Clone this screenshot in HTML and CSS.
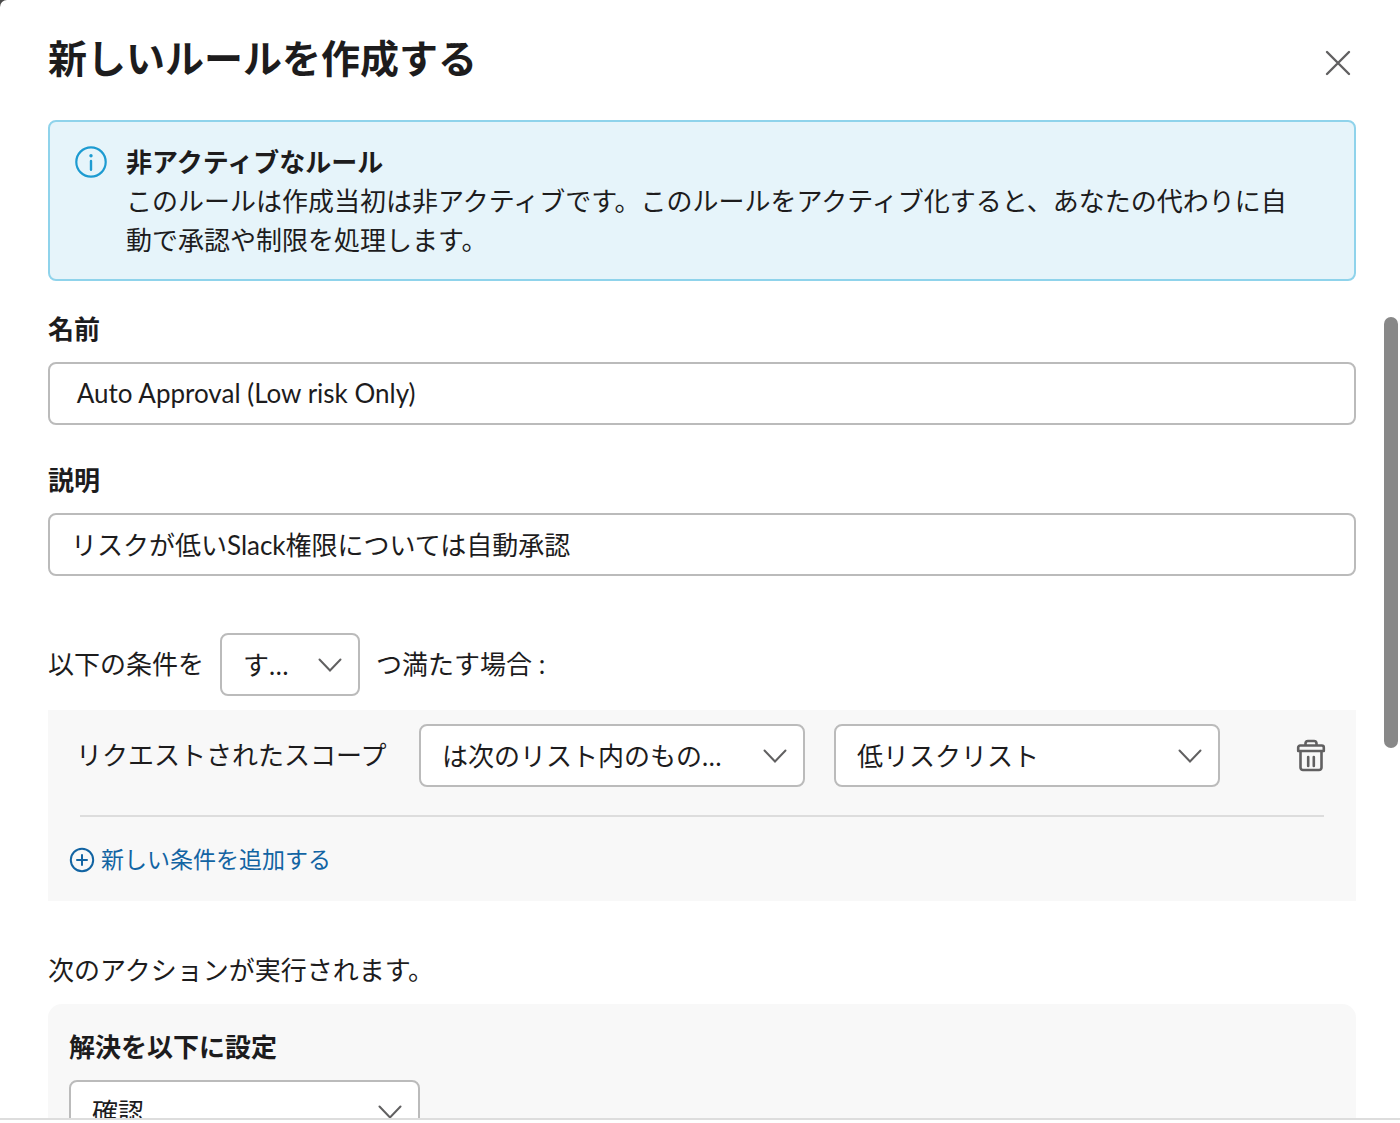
FILE: index.html
```
<!DOCTYPE html>
<html lang="ja">
<head>
<meta charset="utf-8">
<meta name="viewport" content="width=device-width, initial-scale=1">
<title>新しいルールを作成する</title>
<link rel="stylesheet" href="styles.css">
</head>
<body>
<form class="modal">
  <header class="modal-header">
    <h1 class="modal-title">新しいルールを作成する</h1>
    <button class="icon-button close" type="button" aria-label="閉じる">
      <svg width="28" height="28" viewBox="0 0 28 28" fill="none" stroke="currentColor" stroke-width="2.4" stroke-linecap="round"><path d="M3 3l22 22M25 3L3 25"/></svg>
    </button>
  </header>

  <main class="modal-body">
    <section class="notice">
      <svg class="notice-icon" width="32" height="32" viewBox="0 0 32 32" fill="none"><circle cx="16" cy="16" r="14.7" stroke="currentColor" stroke-width="2.2"/><circle cx="16" cy="9.7" r="1.7" fill="currentColor"/><path d="M16 15v8.7" stroke="currentColor" stroke-width="2.4" stroke-linecap="round"/></svg>
      <div class="notice-text">
        <strong>非アクティブなルール</strong>
        <p>このルールは作成当初は非アクティブです。このルールをアクティブ化すると、あなたの代わりに自動で承認や制限を処理します。</p>
      </div>
    </section>

    <div class="field">
      <label for="rule-name">名前</label>
      <input class="control" id="rule-name" type="text" value=" Auto Approval (Low risk Only)">
    </div>
    <div class="field">
      <label for="rule-desc">説明</label>
      <input class="control" id="rule-desc" type="text" value="リスクが低いSlack権限については自動承認">
    </div>

    <div class="match">
      <label for="match-mode">以下の条件を</label>
      <span class="select select-small">
        <select class="control" id="match-mode"><option>す…</option></select>
        <svg class="chevron" width="24" height="14" viewBox="0 0 24 14"><path d="M1.5 1.5L12 12.5L22.5 1.5"/></svg>
      </span>
      <span>つ満たす場合 :</span>
    </div>

    <section class="conditions">
      <div class="condition">
        <label for="operator">リクエストされたスコープ</label>
        <span class="select">
          <select class="control" id="operator"><option>は次のリスト内のもの…</option></select>
          <svg class="chevron" width="24" height="14" viewBox="0 0 24 14"><path d="M1.5 1.5L12 12.5L22.5 1.5"/></svg>
        </span>
        <span class="select">
          <select class="control" aria-label="リスト"><option>低リスクリスト</option></select>
          <svg class="chevron" width="24" height="14" viewBox="0 0 24 14"><path d="M1.5 1.5L12 12.5L22.5 1.5"/></svg>
        </span>
        <button class="icon-button delete" type="button" aria-label="条件を削除">
          <svg width="30" height="34" viewBox="0 0 30 34" fill="none" stroke="currentColor" stroke-width="2.6" stroke-linejoin="round" stroke-linecap="round"><path d="M9.500 6V4.500a2.500 2.500 0 0 1 2.500-2.500h6a2.500 2.500 0 0 1 2.500 2.500v1.500M2.200 12V8.500a2 2 0 0 1 2-2h21.600a2 2 0 0 1 2 2V12zM4.500 12.500v16a2.500 2.500 0 0 0 2.500 2.500h16a2.500 2.500 0 0 0 2.500-2.500v-16M12.200 18v9M17.800 18v9"/></svg>
        </button>
      </div>
      <button class="add" type="button">
        <svg width="26" height="26" viewBox="0 0 26 26" fill="none" stroke="currentColor" stroke-width="2" stroke-linecap="round"><circle cx="13" cy="13" r="11.200"/><path d="M13 8v10M8 13h10"/></svg>
        新しい条件を追加する
      </button>
    </section>

    <p class="lead">次のアクションが実行されます。</p>
    <section class="actions">
      <label for="resolution">解決を以下に設定</label>
      <span class="select select-medium">
        <select class="control" id="resolution"><option>確認</option></select>
        <svg class="chevron" width="24" height="14" viewBox="0 0 24 14"><path d="M1.5 1.5L12 12.5L22.5 1.5"/></svg>
      </span>
    </section>
  </main>
  <div class="scroll-thumb"></div>
  <footer class="modal-footer"></footer>
</form>
</body>
</html>
```
FILE: styles.css
```
* { box-sizing: border-box; }

body {
  margin: 0;
  background: #4a4a4a;
  color: #1d1c1d;
  font: 26px/39px Lato, "Noto Sans CJK JP", sans-serif;
}

h1, p { margin: 0; }

.modal {
  position: relative;
  display: flex;
  flex-direction: column;
  height: 100vh;
  overflow: hidden;
  background: #fff;
  border-top-left-radius: 7px;
}

.modal-header {
  display: flex;
  flex: none;
  align-items: flex-start;
  justify-content: space-between;
  padding: 30px 44px 34px 48px;
}

.modal-title {
  font-size: 39px;
  line-height: 56px;
}

.icon-button {
  display: flex;
  padding: 4px;
  border: 0;
  background: none;
  color: #616061;
}

.close { margin-top: 15px; }

.modal-body {
  flex: 1;
  min-height: 0;
  overflow: hidden;
  padding: 0 44px 0 48px;
}

.notice {
  display: flex;
  gap: 19px;
  padding: 21px 48px 19px 25px;
  border: 2px solid #8fd3eb;
  border-radius: 8px;
  background: #e6f4fa;
  margin-bottom: 29px;
}

.notice-icon {
  flex: none;
  margin-top: 3px;
  color: #1d9bd1;
}

.notice-text strong { display: block; }

.field {
  display: flex;
  flex-direction: column;
  gap: 13px;
  margin-bottom: 36px;
}

.field label,
.actions label { font-weight: 700; }

.control {
  display: block;
  width: 100%;
  height: 63px;
  padding: 2px 21px 0;
  border: 2px solid #bbb;
  border-radius: 8px;
  background: #fff;
  color: inherit;
  font: inherit;
  appearance: none;
}

.field .control { padding: 0 21px 2px; }

.match {
  display: flex;
  align-items: center;
  gap: 16px;
  margin: 57px 0 14px;
}

.select {
  position: relative;
  flex: 1;
}

.select-small { flex: 0 0 140px; }

.chevron {
  position: absolute;
  right: 18px;
  top: 25px;
  fill: none;
  stroke: #616061;
  stroke-width: 2;
  stroke-linecap: round;
  pointer-events: none;
}

.conditions {
  padding: 14px 21px 22px;
  background: #f8f8f8;
}

.condition {
  display: flex;
  align-items: center;
  gap: 29px;
  margin: 0 11px 23px;
  padding-bottom: 28px;
  border-bottom: 2px solid #ddd;
}

.condition label {
  flex: 0 0 314px;
  margin-left: -4px;
}

.delete {
  margin: 0 -2px 0 47px;
  padding: 0;
}

.add {
  display: flex;
  align-items: center;
  gap: 6px;
  padding: 0;
  border: 0;
  background: none;
  color: #1264a3;
  font: inherit;
  font-size: 23px;
}

.lead { margin: 50px 0 14px; }

.actions {
  display: flex;
  flex-direction: column;
  gap: 13px;
  padding: 24px 21px;
  border-radius: 14px;
  background: #f8f8f8;
}

.select-medium {
  flex: none;
  width: 351px;
}

.scroll-thumb {
  position: absolute;
  top: 317px;
  right: 2px;
  width: 14px;
  height: 431px;
  border-radius: 7px;
  background: #888;
}

.modal-footer {
  flex: none;
  height: 5px;
  border-top: 2px solid #ddd;
}
```
